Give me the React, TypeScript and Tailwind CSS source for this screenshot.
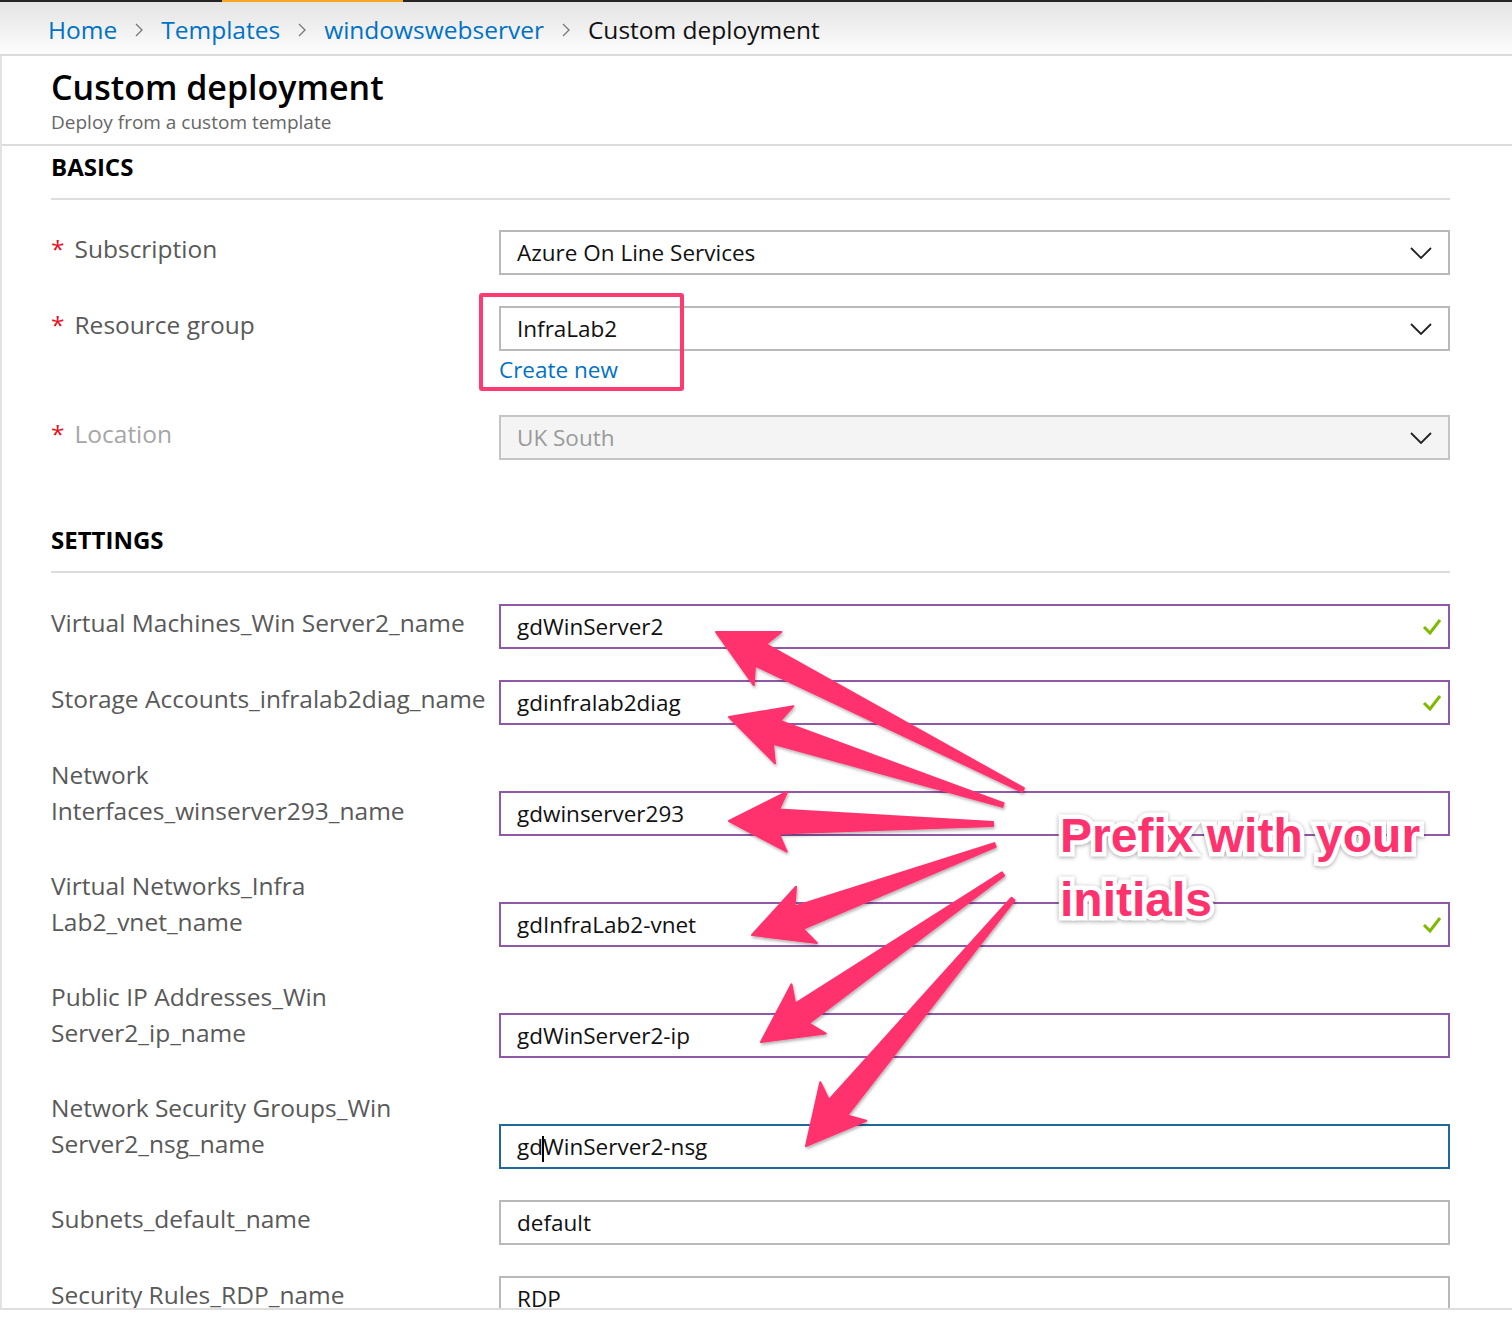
import React from 'react';

type Row = {
  label: string[];
  value: string;
  tone: 'purple' | 'blue' | 'grey';
  valid?: boolean;
  caret?: boolean;
};

const SETTINGS: Row[] = [
  { label: ['Virtual Machines_Win Server2_name'], value: 'gdWinServer2', tone: 'purple', valid: true },
  { label: ['Storage Accounts_infralab2diag_name'], value: 'gdinfralab2diag', tone: 'purple', valid: true },
  { label: ['Network', 'Interfaces_winserver293_name'], value: 'gdwinserver293', tone: 'purple' },
  { label: ['Virtual Networks_Infra', 'Lab2_vnet_name'], value: 'gdInfraLab2-vnet', tone: 'purple', valid: true },
  { label: ['Public IP Addresses_Win', 'Server2_ip_name'], value: 'gdWinServer2-ip', tone: 'purple' },
  { label: ['Network Security Groups_Win', 'Server2_nsg_name'], value: 'gdWinServer2-nsg', tone: 'blue', caret: true },
  { label: ['Subnets_default_name'], value: 'default', tone: 'grey' },
  { label: ['Security Rules_RDP_name'], value: 'RDP', tone: 'grey' },
];

// tail x,y -> tip x,y
const ARROWS = [
  [1023, 790, 716, 632],
  [1003, 805, 729, 717],
  [993, 824, 729, 821],
  [995, 845, 752, 935],
  [1003, 874, 761, 1042],
  [1013, 899, 806, 1146],
];

function arrowPoints(tx: number, ty: number, px: number, py: number) {
  const L = 58, W = 30, nL = 50, nW = 12, tW = 2;
  const len = Math.hypot(px - tx, py - ty);
  const ux = (px - tx) / len, uy = (py - ty) / len;
  const nx = -uy, ny = ux;
  const bx = px - ux * L, by = py - uy * L;
  const cx = px - ux * nL, cy = py - uy * nL;
  const pts = [
    [px, py],
    [bx + nx * W, by + ny * W],
    [cx + nx * nW, cy + ny * nW],
    [tx + nx * tW, ty + ny * tW],
    [tx - nx * tW, ty - ny * tW],
    [cx - nx * nW, cy - ny * nW],
    [bx - nx * W, by - ny * W],
  ];
  return pts.map(p => p[0].toFixed(1) + ',' + p[1].toFixed(1)).join(' ');
}

function Chevron() {
  return (
    <svg width="22" height="12" viewBox="0 0 22 12" className="shrink-0">
      <polyline points="1,1 11,11 21,1" fill="none" stroke="#222" strokeWidth="1.8" />
    </svg>
  );
}

function Check() {
  return (
    <svg width="20" height="18" viewBox="0 0 20 18" className="shrink-0">
      <polyline points="2,9 8,15 18,2" fill="none" stroke="#7fba00" strokeWidth="3" />
    </svg>
  );
}

function Crumb() {
  return (
    <svg width="8" height="16" viewBox="0 0 8 16">
      <polyline points="1,2 7,8 1,14" fill="none" stroke="#777" strokeWidth="1.3" />
    </svg>
  );
}

function SelectBox({ value, disabled }: { value: string; disabled?: boolean }) {
  return (
    <div
      className={`h-[45px] border-2 flex items-center justify-between pl-[16px] pr-[16px] text-[22.5px] ${
        disabled ? 'bg-[#f4f4f4] border-[#c4c4c4] text-[#9a9a9a]' : 'bg-white border-[#b9b9b9] text-[#111]'
      }`}
    >
      <span>{value}</span>
      <Chevron />
    </div>
  );
}

function TextBox({ row }: { row: Row }) {
  const border =
    row.tone === 'purple' ? 'border-[#8f58a8]' : row.tone === 'blue' ? 'border-[#1f6a9a]' : 'border-[#b9b9b9]';
  return (
    <div className={`h-[45px] border-2 ${border} bg-white flex items-center justify-between pl-[16px] pr-[6px] text-[22.5px] text-[#111]`}>
      {row.caret ? (
        <span>
          gd<span className="inline-block w-[2px] h-[26px] bg-black align-middle -mx-[1px]" />WinServer2-nsg
        </span>
      ) : (
        <span>{row.value}</span>
      )}
      {row.valid && <Check />}
    </div>
  );
}

function Label({ children, muted }: { children: React.ReactNode; muted?: boolean }) {
  return (
    <div className={`pt-[1px] leading-[36px] text-[24.5px] whitespace-nowrap ${muted ? 'text-[#a6a6a6]' : 'text-[#595959]'}`}>
      <span className="text-[#e81123] mr-[10px]">*</span>
      {children}
    </div>
  );
}

export default function App() {
  return (
    <div className="relative w-[1512px] h-[1322px] overflow-hidden bg-white font-['Open_Sans',sans-serif]">
      {/* top strip */}
      <div className="h-[2px] bg-[#252525] flex">
        <div className="ml-[222px] w-[181px] bg-[#f5a623]" />
      </div>
      {/* breadcrumb */}
      <div className="h-[54px] border-b-2 border-[#dcdcdc] bg-gradient-to-b from-[#e4e4e4] to-[#fdfdfd] flex items-center pl-[48px] gap-[18px] text-[24.5px] pt-[4px]">
        <span className="text-[#0072c6]">Home</span>
        <Crumb />
        <span className="text-[#0072c6]">Templates</span>
        <Crumb />
        <span className="text-[#0072c6]">windowswebserver</span>
        <Crumb />
        <span className="text-[#111]">Custom deployment</span>
      </div>

      <div className="border-l-2 border-[#e2e2e2]">
        {/* header */}
        <div className="h-[90px] border-b-2 border-[#dcdcdc] pl-[49px] pt-[9px]">
          <div className="text-[34px] leading-[44px] font-semibold text-black">Custom deployment</div>
          <div className="text-[19px] leading-[26px] text-[#666]">Deploy from a custom template</div>
        </div>

        {/* scroll body */}
        <div className="h-[1164px] overflow-hidden border-b-2 border-[#dedede] pl-[49px] pr-[62px]">
          <div className="h-[54px] pt-[6px] border-b-2 border-[#dddddd] text-[24px] leading-[30px] font-bold text-black">
            BASICS
          </div>
          <div className="pt-[30px] flex flex-col gap-[31px]">
            <div className="grid grid-cols-[448px_1fr]">
              <Label>Subscription</Label>
              <SelectBox value="Azure On Line Services" />
            </div>
            <div className="grid grid-cols-[448px_1fr]">
              <Label>Resource group</Label>
              <div>
                <SelectBox value="InfraLab2" />
                <div className="mt-[5px] text-[22.5px] leading-[28px] text-[#0072c6]">Create new</div>
              </div>
            </div>
            <div className="grid grid-cols-[448px_1fr]">
              <Label muted>Location</Label>
              <SelectBox value="UK South" disabled />
            </div>
          </div>

          <div className="mt-[59px] h-[54px] pt-[6px] border-b-2 border-[#dddddd] text-[24px] leading-[30px] font-bold text-black">
            SETTINGS
          </div>
          <div className="pt-[31px] flex flex-col gap-[31px]">
            {SETTINGS.map(row => (
              <div key={row.value} className="grid grid-cols-[448px_1fr]">
                <div className="pt-[1px] leading-[36px] text-[24.5px] text-[#595959] whitespace-nowrap">
                  {row.label.map(l => (
                    <div key={l}>{l}</div>
                  ))}
                </div>
                <div className={row.label.length > 1 ? 'mt-[35px]' : ''}>
                  <TextBox row={row} />
                </div>
              </div>
            ))}
          </div>
        </div>
      </div>

      {/* annotations */}
      <div className="absolute left-[479px] top-[293px] w-[205px] h-[98px] border-4 border-[#ff3a72] rounded-[3px]" />
      <svg className="absolute inset-0 pointer-events-none" width="1512" height="1322">
        <defs>
          <filter id="sh" x="-20%" y="-20%" width="140%" height="140%">
            <feDropShadow dx="1" dy="2" stdDeviation="1.5" floodColor="#000" floodOpacity="0.3" />
          </filter>
        </defs>
        {ARROWS.map((a, i) => (
          <polygon
            key={i}
            points={arrowPoints(a[0], a[1], a[2], a[3])}
            fill="#ff326e"
            stroke="#ff326e"
            strokeWidth="2"
            strokeLinejoin="round"
            filter="url(#sh)"
          />
        ))}
      </svg>
      <div className="absolute left-[1060px] top-[804px] font-['Liberation_Sans',Arial,sans-serif] font-bold text-[48px] leading-[64px] whitespace-nowrap">
        <div className="text-white [-webkit-text-stroke:9px_white] drop-shadow-[0_1px_2px_rgba(0,0,0,0.35)]">
          Prefix with your
          <br />
          initials
        </div>
        <div className="absolute inset-0 text-[#ff326e]">
          Prefix with your
          <br />
          initials
        </div>
      </div>
    </div>
  );
}
